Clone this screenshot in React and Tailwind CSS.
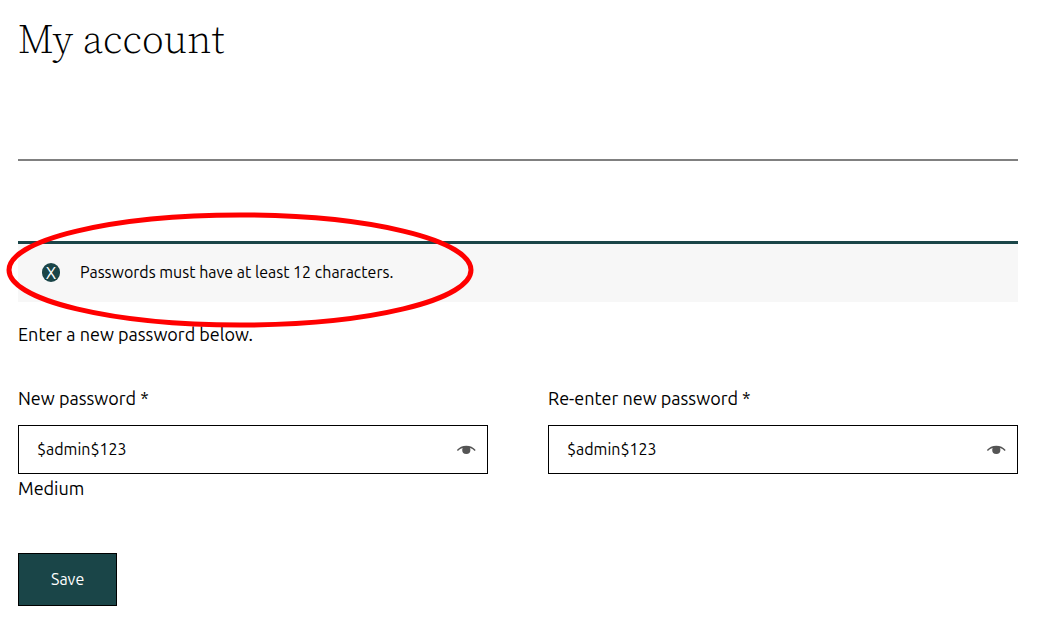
import { useState } from "react";

function EyeIcon() {
  return (
    <svg viewBox="0 0 20 12" className="h-3 w-5" aria-hidden="true">
      <path
        d="M0.9 6.1 C3.3 3.2 6.5 1.8 10.3 1.8 C14.1 1.8 17.3 3.2 19.7 6.1 L18.7 7.1 C17.2 5.5 15.7 4.6 13.9 4.1 C14.2 4.7 14.4 5.4 14.4 6 A4.1 4.1 0 0 1 6.2 6 C6.2 5.4 6.4 4.7 6.7 4.1 C4.9 4.6 3.4 5.5 1.9 7.1 Z"
        fill="#555555"
      />
    </svg>
  );
}

function PasswordField({ id, label, hint }) {
  const [value, setValue] = useState("$admin$123");
  const [visible, setVisible] = useState(true);
  return (
    <div className="min-w-0 flex-1">
      <label htmlFor={id} className="block text-[18px] leading-7">
        {label} *
      </label>
      <div className="mt-[13px] flex h-[49px] items-center border border-black bg-white">
        <input
          id={id}
          type={visible ? "text" : "password"}
          value={value}
          required
          onChange={(e) => setValue(e.target.value)}
          className="h-full min-w-0 flex-1 bg-transparent pb-0.5 pl-[18px] text-[16px] outline-none"
        />
        <button
          type="button"
          aria-label="Toggle password visibility"
          onClick={() => setVisible(!visible)}
          className="mr-[11px] flex cursor-pointer"
        >
          <EyeIcon />
        </button>
      </div>
      {hint && (
        <div aria-live="polite" className="text-[18px] leading-7">
          {hint}
        </div>
      )}
    </div>
  );
}

export default function App() {
  return (
    <main className="bg-white pr-[27px] pb-6 pl-[18px] font-['Ubuntu','Noto_Sans',sans-serif] text-black">
      <h1 className="pt-3 font-['Source_Serif_4_Display','Source_Serif_4','Liberation_Serif',serif] text-[40px] leading-[54px] font-light">
        My account
      </h1>
      <hr className="mt-[93px] border-t-2 border-[#808080]" />

      <div
        role="alert"
        className="relative mt-20 flex h-[61px] items-center gap-5 border-t-[3px] border-[#1a4548] bg-[#f7f7f7] px-6 pb-0.5"
      >
        <span
          aria-hidden="true"
          className="flex h-[19px] w-[18px] items-center justify-center rounded-full bg-[#1a4548] text-[17px] leading-none text-white"
        >
          X
        </span>
        <span className="text-[16px]">Passwords must have at least 12 characters.</span>
        <svg
          viewBox="0 0 468 118"
          className="pointer-events-none absolute top-[-33px] left-[-12px] h-[118px] w-[468px]"
          aria-hidden="true"
        >
          <ellipse cx="234" cy="59" rx="231" ry="55" fill="none" stroke="#ff0000" strokeWidth="5" />
        </svg>
      </div>

      <form onSubmit={(e) => e.preventDefault()}>
        <p className="mt-[18px] text-[18px] leading-7">Enter a new password below.</p>
        <div className="mt-9 flex gap-[60px]">
          <PasswordField id="new-password" label="New password" hint="Medium" />
          <PasswordField id="confirm-password" label="Re-enter new password" />
        </div>
        <button
          type="submit"
          className="mt-[51px] h-[53px] cursor-pointer border border-black bg-[#1a4548] px-8 pb-0.5 text-[16px] text-white"
        >
          Save
        </button>
      </form>
    </main>
  );
}
